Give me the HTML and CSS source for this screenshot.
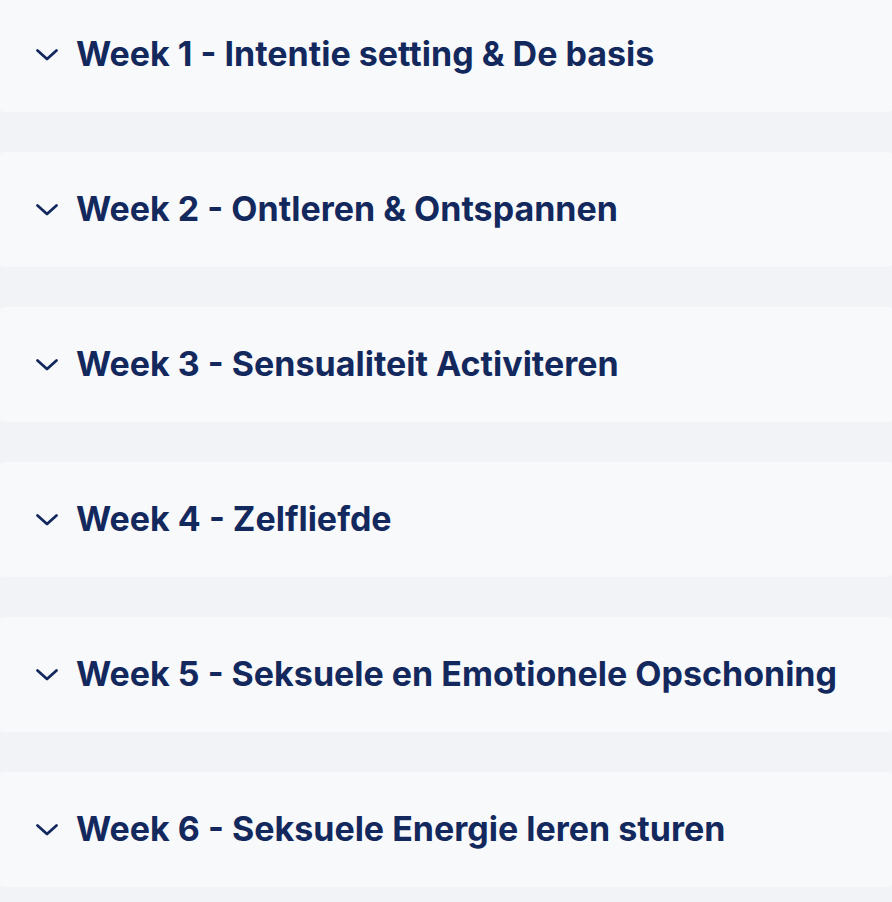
FILE: index.html
```html
<!DOCTYPE html>
<html lang="nl">
<head>
<meta charset="utf-8">
<title>Weken</title>
<link rel="stylesheet" href="styles.css">
</head>
<body>
<div class="list">
  <div class="item"><svg class="chev" viewBox="0 0 24 14" width="24" height="14"><path d="M2.5 2.5L12 11l9.5-8.5"/></svg><span class="title">Week 1 - Intentie setting &amp; De basis</span></div>
  <div class="item"><svg class="chev" viewBox="0 0 24 14" width="24" height="14"><path d="M2.5 2.5L12 11l9.5-8.5"/></svg><span class="title">Week 2 - Ontleren &amp; Ontspannen</span></div>
  <div class="item"><svg class="chev" viewBox="0 0 24 14" width="24" height="14"><path d="M2.5 2.5L12 11l9.5-8.5"/></svg><span class="title">Week 3 - Sensualiteit Activiteren</span></div>
  <div class="item"><svg class="chev" viewBox="0 0 24 14" width="24" height="14"><path d="M2.5 2.5L12 11l9.5-8.5"/></svg><span class="title">Week 4 - Zelfliefde</span></div>
  <div class="item"><svg class="chev" viewBox="0 0 24 14" width="24" height="14"><path d="M2.5 2.5L12 11l9.5-8.5"/></svg><span class="title">Week 5 - Seksuele en Emotionele Opschoning</span></div>
  <div class="item"><svg class="chev" viewBox="0 0 24 14" width="24" height="14"><path d="M2.5 2.5L12 11l9.5-8.5"/></svg><span class="title">Week 6 - Seksuele Energie leren sturen</span></div>
</div>
</body>
</html>
```

FILE: styles.css
```css
html, body {
  margin: 0;
  padding: 0;
  background: #f2f3f7;
}
body {
  font-family: Inter, "Noto Sans", sans-serif;
}
.list {
  display: flex;
  flex-direction: column;
  gap: 40px;
  margin-top: -3px;
}
.item {
  height: 115px;
  background: #f8f9fb;
  border-radius: 4px;
  display: flex;
  align-items: center;
  padding-left: 35px;
  gap: 17px;
  box-sizing: border-box;
}
.chev {
  flex: none;
  fill: none;
  stroke: #13295e;
  stroke-width: 2.8;
  stroke-linecap: round;
  stroke-linejoin: round;
}
.title {
  font-size: 34px;
  font-weight: 700;
  color: #13295e;
  letter-spacing: 0;
  line-height: 1.2;
}
```
